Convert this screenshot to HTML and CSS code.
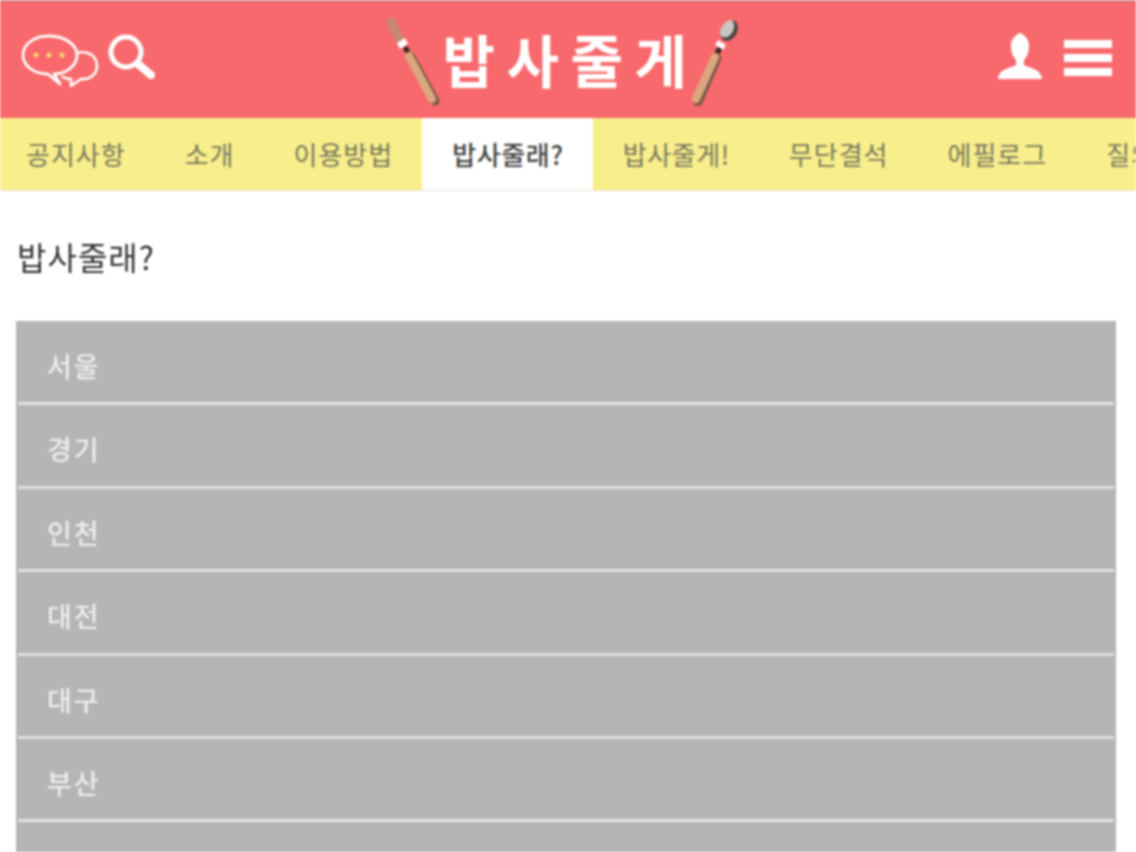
FILE: index.html
```html
<!DOCTYPE html>
<html lang="ko">
<head>
  <meta charset="UTF-8">
  <meta name="viewport" content="width=device-width, initial-scale=1.0">
  <title>밥사줄게</title>
  <link rel="stylesheet" href="styles.css">
</head>
<body>
  <header class="top-bar">
    <div class="top-left">
      <!-- speech bubbles -->
      <svg class="icon-talk" viewBox="0 0 80 54" width="80" height="54">
        <path d="M55 20C60 16 76 18 76 32C76 41 68 46 60 45L50 52L50 45C46 45 43 44 41 42" fill="none" stroke="#fff" stroke-width="2.6" stroke-linejoin="round"/>
        <path d="M28 2C44 2 56 11 56 21C56 31 46 40 33 40L39 50L27 40C12 40 2 31 2 21C2 11 12 2 28 2z" fill="#f9686c" stroke="#fff" stroke-width="2.8" stroke-linejoin="round"/>
        <circle cx="15" cy="21" r="2.6" fill="#fbd36f"/>
        <circle cx="28" cy="21" r="2.6" fill="#fbd36f"/>
        <circle cx="41" cy="21" r="2.6" fill="#fbd36f"/>
      </svg>
      <!-- search -->
      <svg class="icon-search" viewBox="0 0 48 48" width="48" height="48">
        <circle cx="19" cy="19" r="15" fill="none" stroke="#fff" stroke-width="5"/>
        <path d="M31 31l13 11" stroke="#fff" stroke-width="8" stroke-linecap="round"/>
      </svg>
    </div>

    <div class="logo">
      <!-- fork -->
      <svg class="cutlery" viewBox="0 0 60 90" width="60" height="90">
        <path d="M5 6L14 24" stroke="#c58a72" stroke-width="9" stroke-linecap="round"/>
        <path d="M11 27l8-5 3 6-8 5z" fill="#fff"/>
        <path d="M19 31l5 9" stroke="#3a2a22" stroke-width="5"/>
        <path d="M25 41L49 85" stroke="#7a5a48" stroke-width="9" stroke-linecap="round"/>
        <path d="M23 40L46 83" stroke="#dba77f" stroke-width="8" stroke-linecap="round"/>
      </svg>
      <span class="logo-text">밥사줄게</span>
      <!-- spoon -->
      <svg class="cutlery" viewBox="0 0 60 90" width="60" height="90">
        <path d="M53 5c-7-2-14 6-14 14 0 5 6 8 11 4 6-4 8-13 3-18z" fill="#4d4544"/>
        <path d="M50 4c-6 0-12 6-12 13 0 4 5 6 9 3 5-4 7-11 3-16z" fill="#c9c6c2"/>
        <path d="M36 24l8 5-3 5-8-5z" fill="#fff"/>
        <path d="M38 32l-5 9" stroke="#3a2a22" stroke-width="5"/>
        <path d="M35 42L16 86" stroke="#7a5a48" stroke-width="9" stroke-linecap="round"/>
        <path d="M33 41L14 83" stroke="#dba77f" stroke-width="8" stroke-linecap="round"/>
      </svg>
    </div>

    <div class="top-right">
      <!-- user -->
      <svg class="icon-user" viewBox="0 0 46 48" width="46" height="48">
        <path d="M23 1c5 2 9 6 9 13 0 6-2 11-5 14v5c4 3 17 3 18 14H1c1-11 14-11 18-14v-5c-3-3-5-8-5-14 0-7 4-11 9-13z" fill="#fff"/>
      </svg>
      <div class="icon-menu"><span></span><span></span><span></span></div>
    </div>
  </header>

  <nav class="tabs">
    <a href="#">공지사항</a>
    <a href="#">소개</a>
    <a href="#">이용방법</a>
    <a href="#" class="active tight">밥사줄래?</a>
    <a href="#" class="tight">밥사줄게!</a>
    <a href="#">무단결석</a>
    <a href="#">에필로그</a>
    <a href="#">질의응답</a>
  </nav>

  <main>
    <h2 class="page-title">밥사줄래?</h2>
    <ul class="region-list">
      <li>서울</li>
      <li>경기</li>
      <li>인천</li>
      <li>대전</li>
      <li>대구</li>
      <li>부산</li>
      <li></li>
    </ul>
  </main>
</body>
</html>
```

FILE: styles.css
```css
/* General styles */
html, body {
  height: 852px;
  overflow: hidden;
}

body {
  margin: 0;
  font-family: "Noto Sans CJK KR", "Noto Sans", sans-serif;
  background-color: #fff;
  color: #333;
  filter: blur(0.8px);
}

/* Header */
.top-bar {
  display: grid;
  grid-template-columns: 1fr auto 1fr;
  align-items: center;
  height: 116px;
  padding: 0 24px 0 21px;
  background-color: #f7696c;
  border-top: 2px solid #d57c84;
}

.top-left,
.top-right {
  display: flex;
  align-items: center;
}

.top-left {
  gap: 6px;
}

.top-right {
  justify-content: flex-end;
  gap: 21px;
}

.logo {
  display: flex;
  align-items: center;
  margin-right: 5px;
}

.logo-text {
  color: #fff;
  font-size: 57px;
  font-weight: 700;
  letter-spacing: 11.5px;
  line-height: 1;
  margin: -3px -16px 0 -3px;
}

.cutlery {
  flex: none;
  margin-top: 2px;
}

.icon-talk {
  margin-top: 2px;
}

.icon-search {
  margin-top: -6px;
}

.icon-user {
  margin-top: -8px;
}

.icon-menu {
  display: flex;
  flex-direction: column;
  gap: 6px;
  width: 48px;
  margin-top: -4px;
}

.icon-menu span {
  display: block;
  height: 8px;
  background-color: #fff;
}

/* Tabs */
.tabs {
  display: flex;
  height: 72px;
  margin-left: -4px;
  background-color: #f8ee8c;
  border-bottom: 1px solid #e8e6d0;
  overflow: hidden;
  white-space: nowrap;
}

.tabs a {
  flex: none;
  padding: 0 29px 0 30px;
  font-size: 26px;
  letter-spacing: 1px;
  line-height: 72px;
  color: #77775c;
  text-decoration: none;
}

.tabs a.tight {
  letter-spacing: 0.6px;
}

.tabs a.active {
  background-color: #fff;
  color: #444;
  font-weight: 500;
}

/* Region list */
main {
  padding: 0 20px 0 16px;
}

.page-title {
  margin: 40px 0 40px 1px;
  font-size: 32px;
  font-weight: 400;
  letter-spacing: 1px;
  line-height: 50px;
  color: #333;
}

.region-list {
  list-style-type: none;
  margin: 0;
  padding: 0;
  border: 2px solid #b6b4b5;
  border-top-width: 1px;
  border-bottom: 0;
}

.region-list li {
  height: 76.4px;
  padding: 4px 0 0 29px;
  font-size: 27px;
  font-weight: 500;
  letter-spacing: 2px;
  line-height: 80px;
  color: #eeeeee;
  background-color: #b6b4b5;
  border-bottom: 3px solid #e2e1e1;
}
```
